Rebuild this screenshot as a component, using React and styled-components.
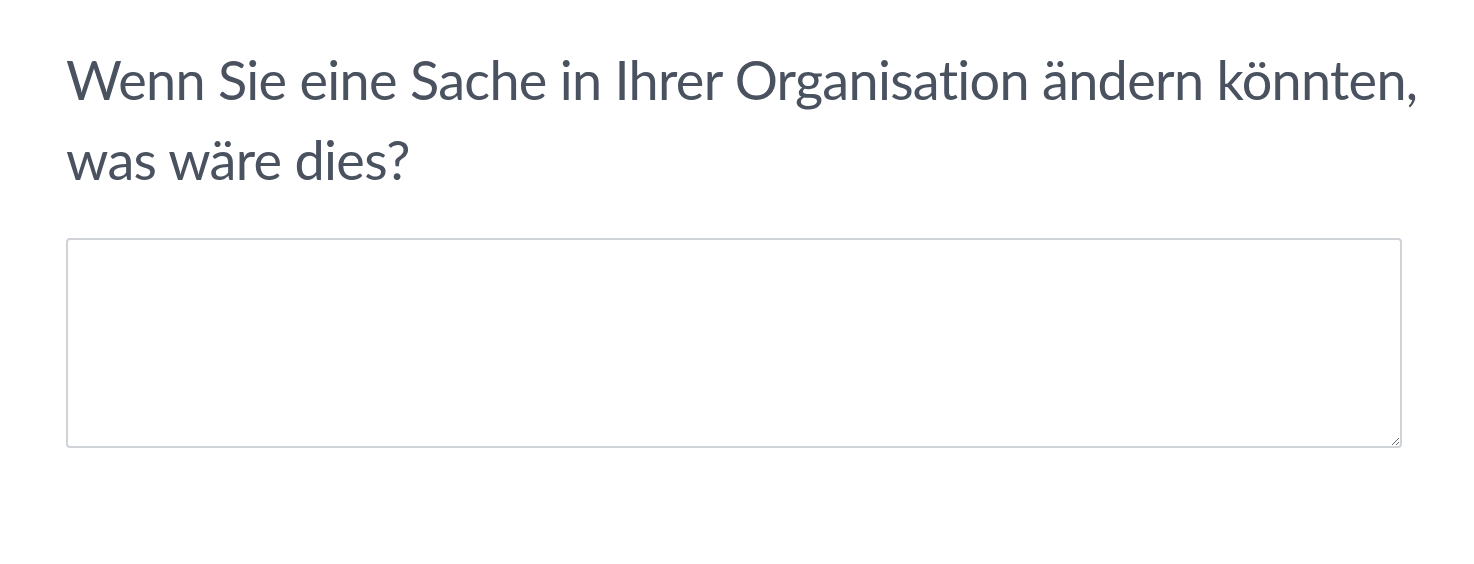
import React from "react";
import styled, { createGlobalStyle } from "styled-components";

const GlobalStyle = createGlobalStyle`
  html, body {
    margin: 0;
    padding: 0;
    background: #ffffff;
  }
  body {
    font-family: Lato, "Noto Sans", sans-serif;
  }
`;

const Page = styled.main`
  padding: 40px 36px 0 66px;
`;

const Question = styled.label`
  display: block;
  margin: 0 0 38px;
  font-size: 54px;
  line-height: 80px;
  font-weight: 400;
  color: #4a5260;
  letter-spacing: -0.7px;
  font-variant-ligatures: none;
  -webkit-font-smoothing: antialiased;
`;

const Answer = styled.textarea`
  display: block;
  box-sizing: border-box;
  width: 1336px;
  height: 210px;
  margin: 0;
  padding: 12px 16px;
  border: 2px solid #cfd2d6;
  border-radius: 4px;
  background: #fff;
  font-family: inherit;
  font-size: 28px;
  color: #4a5260;
  resize: vertical;
  outline: none;
`;

export default function App() {
  return (
    <Page>
      <GlobalStyle />
      <Question htmlFor="answer">
        Wenn Sie eine Sache in Ihrer Organisation ändern könnten, was wäre dies?
      </Question>
      <Answer id="answer" />
    </Page>
  );
}
